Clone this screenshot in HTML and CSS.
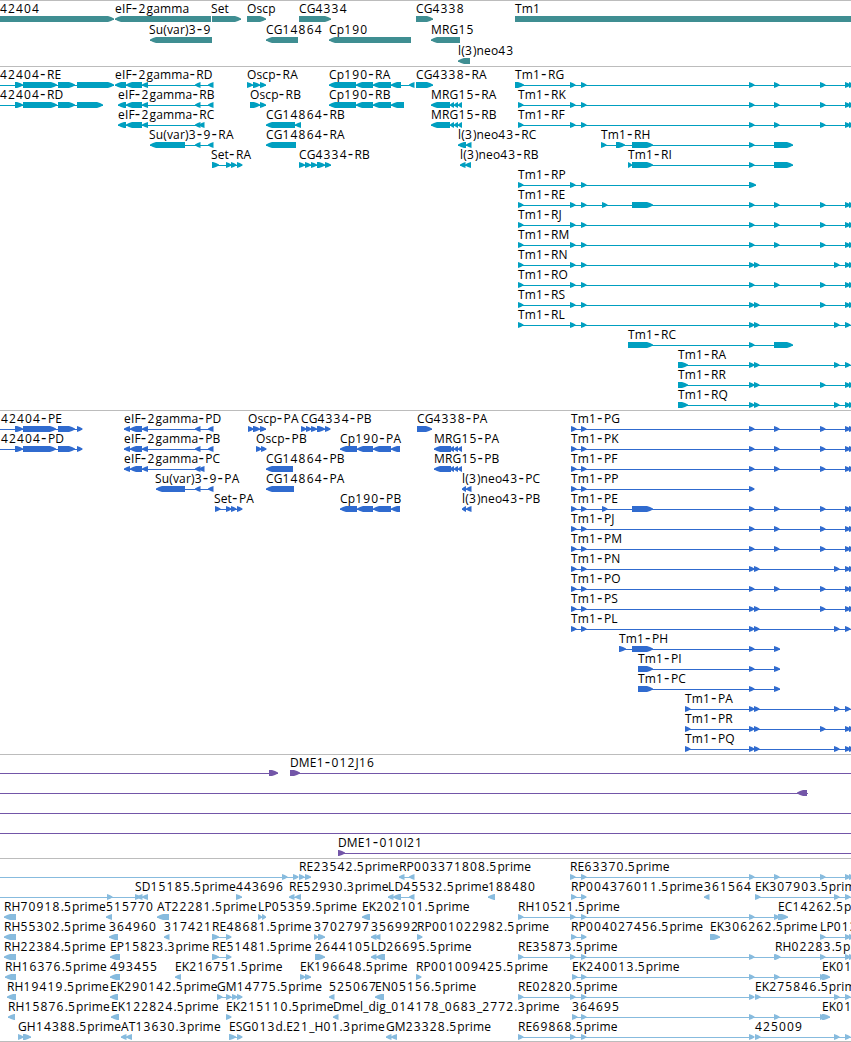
FILE: index.html
```
<!DOCTYPE html>
<html lang="en">
<head>
    <meta charset="UTF-8">
    <meta name="viewport" content="width=device-width, initial-scale=1.0">
    <title>Genome Browser</title>
    <link rel="stylesheet" href="styles.css">
</head>
<body>
    <main class="browser">
        <section class="track genes" id="genes"></section>
        <section class="track transcripts" id="transcripts"></section>
        <section class="track proteins" id="proteins"></section>
        <section class="track bacs" id="bacs"></section>
        <section class="track ests" id="ests"></section>
    </main>
    <script src="tracks.js"></script>
</body>
</html>
```

FILE: styles.css
```
body {
    margin: 0;
    background-color: #fff;
    font-family: "Open Sans", sans-serif;
    font-size: 12px;
    color: #000;
}

.browser {
    display: flex;
    flex-direction: column;
    width: 851px;
    height: 1042px;
    overflow: hidden;
}

.track {
    border-top: 1px solid #bcbcbc;
    padding-bottom: 3px;
}

.row {
    display: block;
    width: 851px;
    height: 20px;
    overflow: visible;
}

.row text {
    fill: #000;
    white-space: pre;
    font-kerning: none;
    letter-spacing: 0.15px;
}

/* digits are set wider than letters */
.row .num {
    letter-spacing: 1.15px;
}

.row .dash {
    font-family: "DejaVu Sans", sans-serif;
    font-size: 15px;
    letter-spacing: 1.4px;
}

.row rect {
    shape-rendering: crispEdges;
}

/* Genes */
.genes {
    fill: #3f8e92;
    padding-bottom: 2px;
}

.genes .row {
    height: 21px;
}

/* Transcripts */
.transcripts {
    fill: #009fc0;
}

/* Proteins */
.proteins {
    fill: #306bcf;
}

/* BAC ends */
.bacs {
    fill: #7356a8;
}

/* ESTs */
.ests {
    fill: #87bbde;
    padding-bottom: 2px;
    border-bottom: 1px solid #bcbcbc;
}
```

FILE: tracks.js
```
// Feature: [label, label x, strand, blocks, line start, line end]
// A block is "start:end", a lone number is a small 5px block.
const END = 860;
const TM = '570 581 749 774 820 845 849';
const TMP = '571 581 749 774 820 845 849';

const tracks = {
    genes: [
        [['42404', 0, '+', '-10:114'], ['eIF-2gamma', 115, '-', '115:211'], ['Set', 211, '+', '212:241'],
         ['Oscp', 247, '+', '247:266'], ['CG4334', 299, '+', '299:331'], ['CG4338', 416, '+', '416:433'], ['Tm1', 515, '+', '515:880']],
        [['Su(var)3-9', 149, '-', '150:212'], ['CG14864', 266, '-', '266:298'], ['Cp190', 329, '-', '329:411'], ['MRG15', 431, '-', '431:460']],
        [['l(3)neo43', 458, '-', '458:470']]
    ],
    transcripts: [
        [['42404-RE', 0, '+', '15:23 23:57 58:75 77:114', 0], ['eIF-2gamma-RD', 115, '-', '115:126 126:142 142:148 195 208'],
         ['Oscp-RA', 247, '+', '247:253 253:260 260:266'], ['Cp190-RA', 329, '-', '329:356 356:373 373:391 391:401 409'],
         ['CG4338-RA', 416, '+', '416:433'], ['Tm1-RG', 515, '+', '515:524 ' + TM, 515, END]],
        [['42404-RD', 0, '+', '15:23 23:57 58:75 77:103', 0], ['eIF-2gamma-RB', 118, '-', '118:126 126:142 142:148 195 208'],
         ['Oscp-RB', 250, '+', '250:260 260:266'], ['Cp190-RB', 329, '-', '329:356 356:373 373:391 391:404'],
         ['MRG15-RA', 431, '-', '431:450 450:454 454:458 458:462'], ['Tm1-RK', 518, '+', '518 ' + TM, 518, END]],
        [['eIF-2gamma-RC', 118, '-', '118:126 126:142 142:148 195 199'], ['CG14864-RB', 266, '-', '266:295 295:301'],
         ['MRG15-RB', 431, '-', '431:450 450:454 454:458 458:462'], ['Tm1-RF', 518, '+', '518 ' + TM, 518, END]],
        [['Su(var)3-9-RA', 149, '-', '150:185 195 208'], ['CG14864-RA', 266, '-', '266:296'],
         ['l(3)neo43-RC', 458, '-', '458:466 466'], ['Tm1-RH', 601, '+', '601 616:625 632:653 749 774:793']],
        [['Set-RA', 211, '+', '212:219 226 231 237'], ['CG4334-RB', 299, '+', '299:305 305:311 311:317 317:325 325:331'],
         ['l(3)neo43-RB', 460, '-', '460 465:471'], ['Tm1-RI', 628, '+', '628:632 632:653 749 774:793']],
        [['Tm1-RP', 518, '+', '518 570 581 749:756']],
        [['Tm1-RE', 518, '+', '518 570 581 602 632:653 749 774 820 845 849', 518, END]],
        [['Tm1-RJ', 518, '+', '518 ' + TM, 518, END]],
        [['Tm1-RM', 518, '+', '518 ' + TM, 518, END]],
        [['Tm1-RN', 518, '+', '518 570 581 749 754 834 845 849', 518, END]],
        [['Tm1-RO', 518, '+', '518 ' + TM, 518, END]],
        [['Tm1-RS', 518, '+', '518 570 581 749 754 820 845 849', 518, END]],
        [['Tm1-RL', 518, '+', '518 570 581 749 754 834 845', 518, END]],
        [['Tm1-RC', 628, '+', '628:653 749 774:793']],
        [['Tm1-RA', 678, '+', '678:688 749 754 834 845', 678, END]],
        [['Tm1-RR', 678, '+', '678:688 749 754 820 845 849', 678, END]],
        [['Tm1-RQ', 678, '+', '678:688 749 754 834 845 849', 678, END]]
    ],
    proteins: [
        [['42404-PE', 1, '+', '15:23 23:56 58:75 77', 0], ['eIF-2gamma-PD', 124, '-', '124:130 130:142 142:148 195 208'],
         ['Oscp-PA', 248, '+', '248 253:260 260:266'], ['CG4334-PB', 301, '+', '301 306 311:317 317:325 325'],
         ['CG4338-PA', 417, '+', '417:432'], ['Tm1-PG', 571, '+', TMP, 571, END]],
        [['42404-PD', 1, '+', '15:23 23:56 58:75 77', 0], ['eIF-2gamma-PB', 124, '-', '124:130 130:142 142:148 195 208'],
         ['Oscp-PB', 256, '+', '256 261'], ['Cp190-PA', 340, '-', '340:357 357:373 373:391 391:400'],
         ['MRG15-PA', 434, '-', '434:451 450:454 454:458 458:462'], ['Tm1-PK', 571, '+', TMP, 571, END]],
        [['eIF-2gamma-PC', 124, '-', '124:130 130:142 142:148 195 199'], ['CG14864-PB', 266, '-', '266:293'],
         ['MRG15-PB', 434, '-', '434:451 450:454 454:458 458:462'], ['Tm1-PF', 571, '+', TMP, 571, END]],
        [['Su(var)3-9-PA', 155, '-', '156:185 195 208'], ['CG14864-PA', 266, '-', '266:294'],
         ['l(3)neo43-PC', 462, '-', '462:466 466'], ['Tm1-PP', 571, '+', '571 581 749']],
        [['Set-PA', 214, '+', '215 226 231 237'], ['Cp190-PB', 340, '-', '340:357 357:373 373:391 391:400'],
         ['l(3)neo43-PB', 462, '-', '462:466 466'], ['Tm1-PE', 571, '+', '571 581 602 632:653 749 774 820 845 849', 571, END]],
        [['Tm1-PJ', 571, '+', TMP, 571, END]],
        [['Tm1-PM', 571, '+', TMP, 571, END]],
        [['Tm1-PN', 571, '+', '571 581 749 754 834 845 849', 571, END]],
        [['Tm1-PO', 571, '+', TMP, 571, END]],
        [['Tm1-PS', 571, '+', '571 581 749 754 820 845 849', 571, END]],
        [['Tm1-PL', 571, '+', '571 581 749 754 834 845', 571, END]],
        [['Tm1-PH', 619, '+', '619:626 632:653 749 774:780']],
        [['Tm1-PI', 638, '+', '638:653 749 774:780']],
        [['Tm1-PC', 638, '+', '638:653 749 774:780']],
        [['Tm1-PA', 685, '+', '685 749 754 834 845', 685, END]],
        [['Tm1-PR', 685, '+', '685 749 754 820 845 849', 685, END]],
        [['Tm1-PQ', 685, '+', '685 749 754 834 845 849', 685, END]]
    ],
    bacs: [
        [['', 0, '+', '269:278', 0], ['DME1-012J16', 290, '+', '290:300', 290, END]],
        [['', 0, '-', '797:807', 0, 808]],
        [['', 0, '+', '', 0, END]],
        [['', 0, '+', '', 0, END]],
        [['DME1-010I21', 338, '+', '338:345', 338, END]]
    ],
    ests: [
        [['', 0, '+', '282 293', 0], ['RE23542.5prime', 299, '+', '299 305:311'], ['RP003371808.5prime', 399, '-', '399 409'],
         ['RE63370.5prime', 570, '+', TM, 570, END]],
        [['', 0, '+', '107 135', 0], ['SD15185.5prime', 135, '-', '137 142:148'], ['443696', 236, '+', '236:242'],
         ['RE52930.3prime', 289, '-', '289 295:301'], ['LD45532.5prime', 388, '-', '388 393:401 409'], ['188480', 488, '-', '488:495'],
         ['RP004376011.5prime', 571, '+', '571 581'], ['361564', 704, '-', '704'], ['EK307903.5prime', 755, '+', '755 834 845', 755, END]],
        [['RH70918.5prime', 4, '-', '4:16'], ['515770', 106, '-', '106:112'], ['AT22281.5prime', 157, '-', '157:169'],
         ['LP05359.5prime', 258, '+', '258:262 262:266'], ['EK202101.5prime', 362, '-', '362:370'],
         ['RH10521.5prime', 518, '+', '518 570 581 749 774'], ['EC14262.5prime', 778, '+', '778:788']],
        [['RH55302.5prime', 4, '-', '4:16'], ['364960', 109, '-', '109:118'], ['317421', 164, '-', '164'],
         ['RE48681.5prime', 212, '+', '212:219 226'], ['3702797', 314, '+', '314:318 318:325'], ['356992', 371, '-', '371 375'],
         ['RP001022982.5prime', 417, '+', '417'], ['RP004027456.5prime', 571, '+', '571 581'], ['EK306262.5prime', 710, '+', '710:720'],
         ['LP01332.5prime', 820, '+', '820 845 849', 820, END]],
        [['RH22384.5prime', 4, '-', '4:16'], ['EP15823.3prime', 110, '-', '110:120'], ['RE51481.5prime', 212, '+', '212:219 226'],
         ['2644105', 315, '+', '315:325'], ['LD26695.5prime', 371, '-', '371 376:385'],
         ['RE35873.5prime', 518, '+', '518 570 581 749 774'], ['RH02283.5prime', 775, '+', '775 820 845 849', 775, END]],
        [['RH16376.5prime', 5, '-', '5:16'], ['493455', 110, '-', '110:120'], ['EK216751.5prime', 175, '-', '175:181'],
         ['EK196648.5prime', 300, '+', '300 305:311'], ['RP001009425.5prime', 416, '+', '416'],
         ['EK240013.5prime', 572, '+', '572 581 749 774 820'], ['EK01', 822, '+', '822:830']],
        [['RH19419.5prime', 7, '-', '7:16'], ['EK290142.5prime', 110, '-', '110:118'], ['GM14775.5prime', 217, '+', '217 226 232 237'],
         ['525067', 329, '-', '329'], ['EN05156.5prime', 375, '-', '375:384'],
         ['RE02820.5prime', 518, '+', '518 570 581 749'], ['EK275846.5prime', 755, '+', '755 834 845', 755, END]],
        [['RH15876.5prime', 8, '-', '8:15'], ['EK122824.5prime', 111, '-', '111:119'], ['EK215110.5prime', 226, '+', '226'],
         ['Dmel_dig_014178_0683_2772.3prime', 333, '-', '333'], ['364695', 572, '+', '572 581 749 774 820'], ['EK01', 822, '+', '822:830']],
        [['GH14388.5prime', 18, '+', '18 23:31'], ['AT13630.3prime', 121, '-', '121 126:132'],
         ['ESG013d.E21_H01.3prime', 229, '+', '229:236 237'], ['GM23328.5prime', 386, '-', '386 391:397'],
         ['RE69868.5prime', 518, '+', '518 570 581 749'], ['425009', 755, '+', '755 834 845', 755, END]]
    ]
};

// Bar with a pointed head on the strand side
function arrow(start, end, strand) {
    const size = Math.min(end - start, 6);
    const dir = strand === '+' ? 1 : -1;
    const tail = strand === '+' ? start : end;
    const tip = strand === '+' ? end : start;
    const neck = tip - dir * size;
    const mid = tip - dir * size / 2;
    return `<polygon points="${tail},15 ${neck},15 ${mid},16 ${tip},17.4 ${tip},18.6 ${mid},20 ${neck},21 ${tail},21"/>`;
}

function drawFeature([label, x, strand, blocks, from, to]) {
    const list = blocks.split(' ').filter(b => b).map(b => {
        const [s, e] = b.split(':').map(Number);
        return [s, e === undefined ? s + 5.5 : e];
    });
    const start = from === undefined ? list[0][0] : from;
    const end = to === undefined ? list[list.length - 1][1] : to;
    const text = label.replace(/\d+|-/g, m => `<tspan class="${m === '-' ? 'dash' : 'num'}">${m}</tspan>`);

    let out = `<rect x="${start}" y="18" width="${Math.floor(end - start)}" height="1"/>`;
    out += list.map(([s, e]) => arrow(s, e, strand)).join('');
    if (label) {
        out += `<text x="${x}" y="12">${text}</text>`;
    }
    return out;
}

for (const id in tracks) {
    document.getElementById(id).innerHTML = tracks[id]
        .map(row => `<svg class="row">${row.map(drawFeature).join('')}</svg>`)
        .join('');
}
```
